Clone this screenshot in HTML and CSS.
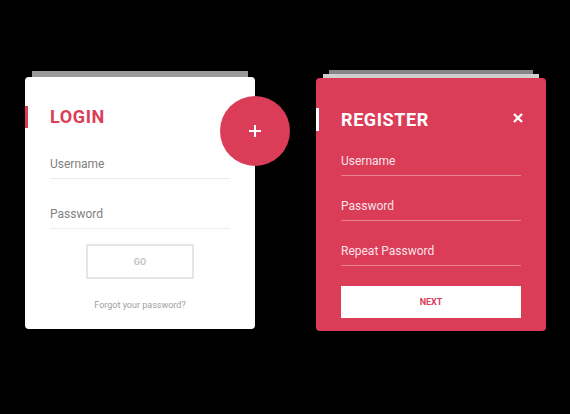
FILE: index.html
```html
<!DOCTYPE html>
<html>
<head>
<meta charset="utf-8">
<link rel="stylesheet" href="styles.css">
</head>
<body>
<div class="stage">
  <div class="card login">
    <h2 class="title">LOGIN</h2>
    <div class="field">Username</div>
    <div class="field">Password</div>
    <div class="go-wrap"><button class="go">GO</button></div>
    <div class="forgot">Forgot your password?</div>
    <div class="fab">
      <svg width="14" height="14" viewBox="0 0 14 14"><path d="M7 1V13M1 7H13" stroke="#fff" stroke-width="2"/></svg>
    </div>
  </div>
  <div class="card register">
    <div class="reg-head">
      <h2 class="title">REGISTER</h2>
      <svg class="close" width="10" height="10" viewBox="0 0 10 10"><path d="M1 1L9 9M9 1L1 9" stroke="#fff" stroke-width="2.4"/></svg>
    </div>
    <div class="field">Username</div>
    <div class="field">Password</div>
    <div class="field">Repeat Password</div>
    <button class="next">NEXT</button>
  </div>
</div>
</body>
</html>
```
FILE: styles.css
```css
html, body {
  margin: 0;
  padding: 0;
  background: #000;
  width: 570px;
  height: 414px;
  overflow: hidden;
  font-family: Roboto, "Liberation Sans", sans-serif;
}
.stage {
  display: flex;
  align-items: flex-start;
  gap: 61px;
  padding: 77px 0 0 25px;
}
.card {
  width: 230px;
  border-radius: 4px;
  box-sizing: border-box;
  position: relative;
}
.login {
  background: #fff;
  height: 252px;
  padding: 29px 25px 0 0;
  box-shadow: 0 -13px 0 -7px #9a9a9a;
}
.register {
  background: #db3d59;
  height: 253px;
  margin-top: 1px;
  padding: 30px 25px 0 0;
  box-shadow: 0 -11px 0 -7px #cfcfcf, 0 -21px 0 -13px #858585;
}
.title {
  margin: 0;
  font-size: 18px;
  line-height: 22px;
  height: 22px;
  font-weight: 700;
  letter-spacing: 0.6px;
  padding-left: 22px;
  border-left: 3px solid #db3d59;
  color: #db3d59;
}
.register .title {
  color: #fff;
  border-left-color: #fff;
  line-height: 23px;
  height: 23px;
}
.reg-head {
  display: flex;
  align-items: flex-start;
  justify-content: space-between;
}
.close {
  display: block;
  margin-top: 5px;
  margin-right: -2px;
}
.field {
  margin-left: 25px;
  font-size: 12px;
  font-weight: 400;
  line-height: 20px;
  padding: 1px 0 4px;
  border-bottom: 1px solid #ececec;
  color: #808080;
}
.login .field { margin-top: 24px; }
.login .field:first-of-type { margin-top: 25px; }
.register .field {
  margin-top: 19px;
  color: rgba(255,255,255,0.88);
  border-bottom-color: rgba(255,255,255,0.35);
}
.go-wrap {
  display: flex;
  justify-content: center;
  padding-left: 25px;
  margin-top: 15px;
}
.go {
  width: 108px;
  height: 35px;
  background: #fff;
  border: 2px solid #e6e6e6;
  font-family: inherit;
  font-size: 9px;
  font-weight: 700;
  color: #c4c4c4;
  padding: 0;
}
.forgot {
  text-align: center;
  padding-left: 25px;
  margin-top: 19px;
  font-size: 9px;
  line-height: 14px;
  color: #a0a0a0;
}
.fab {
  position: absolute;
  left: 195px;
  top: 19px;
  width: 70px;
  height: 70px;
  border-radius: 50%;
  background: #db3d59;
  display: flex;
  align-items: center;
  justify-content: center;
}
.fab svg { display: block; }
.next {
  display: block;
  margin: 20px 0 0 25px;
  width: 180px;
  height: 32px;
  background: #fff;
  border: 0;
  font-family: inherit;
  font-size: 9px;
  font-weight: 700;
  color: #db3d59;
  padding: 0;
}
```
